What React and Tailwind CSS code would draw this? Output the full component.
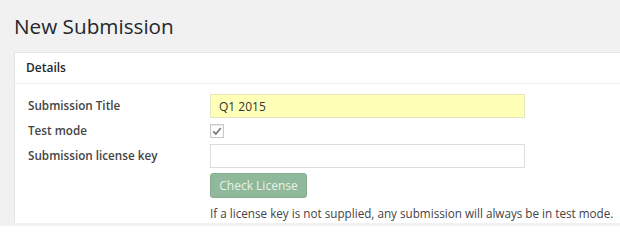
export default function App() {
  return (
    <div
      className="w-[620px] h-[226px] overflow-hidden bg-[#f1f1f1] text-[#23282d]"
      style={{ fontFamily: '"Open Sans", "Noto Sans", sans-serif' }}
    >
      <h1 className="pl-[14px] pt-[13px] text-[20.7px] leading-[26px] font-normal">New Submission</h1>

      <div className="ml-[14px] mt-[13px] bg-white border-t border-l border-[#e5e5e5]">
        <div className="h-[31px] flex items-center pl-[11px] border-b border-[#eeeeee] text-[12px] font-semibold text-[#23282d]">
          Details
        </div>

        <div className="grid grid-cols-[182px_1fr] pl-[13px] pt-[10px] text-[11.7px] text-[#444]">
          <div className="h-[24px] flex items-center font-semibold">Submission Title</div>
          <div>
            <input
              readOnly
              value="Q1 2015"
              className="w-[315px] h-[24px] border border-[#e5e5c0] bg-[#ffffb8] px-[8px] text-[12px] text-[#333] outline-none"
            />
          </div>

          <div className="h-[26px] flex items-center font-semibold">Test mode</div>
          <div className="h-[26px] flex items-center">
            <span className="w-[14px] h-[14px] border border-[#c8c8c8] bg-white flex items-center justify-center shadow-[inset_0_1px_2px_rgba(0,0,0,0.1)]">
              <svg viewBox="0 0 16 16" className="w-[12px] h-[12px]">
                <path d="M3 8.5 L6.5 12 L13 4" fill="none" stroke="#7a7a7a" strokeWidth="2.4" />
              </svg>
            </span>
          </div>

          <div className="h-[24px] flex items-center font-semibold">Submission license key</div>
          <div>
            <input
              readOnly
              value=""
              className="w-[315px] h-[24px] border border-[#dddddd] bg-white px-[8px] outline-none"
            />
          </div>

          <div />
          <div className="pt-[5px]">
            <button className="w-[97px] h-[25px] rounded-[3px] bg-[#90b89a] border border-[#86ad90] text-[12px] text-[#e8f2ea]">
              Check License
            </button>
          </div>

          <div />
          <p className="pt-[7px] text-[11.7px] text-[#444] whitespace-nowrap">
            If a license key is not supplied, any submission will always be in test mode.
          </p>
        </div>
      </div>
    </div>
  );
}
